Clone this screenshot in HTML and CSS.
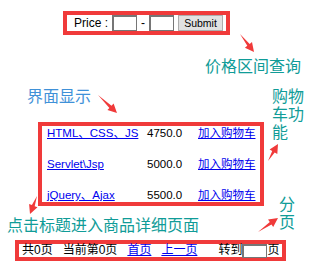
FILE: index.html
```html
<!DOCTYPE html>
<html lang="zh-CN">
<head>
  <meta charset="UTF-8">
  <meta name="viewport" content="width=device-width, initial-scale=1.0">
  <title>商品列表</title>
  <link rel="stylesheet" href="styles.css">
</head>
<body>
  <div class="page">
    <form class="box search">
      <label for="minPrice">Price :</label>
      <input id="minPrice" type="text">
      <span>-</span>
      <input id="maxPrice" type="text">
      <button type="button">Submit</button>
    </form>

    <div class="box list">
      <a href="#">HTML、CSS、JS</a><span>4750.0</span><a href="#">加入购物车</a>
      <a href="#">Servlet\Jsp</a><span>5000.0</span><a href="#">加入购物车</a>
      <a href="#">jQuery、Ajax</a><span>5500.0</span><a href="#">加入购物车</a>
    </div>

    <div class="box pager">
      <span>共0页</span>
      <span>当前第0页</span>
      <a href="#">首页</a>
      <a href="#">上一页</a>
      <span class="goto">转到<input type="text">页</span>
    </div>

    <!-- annotations -->
    <div class="note note-price">价格区间查询</div>
    <div class="note note-view">界面显示</div>
    <div class="note note-cart">购物<br>车功<br>能</div>
    <div class="note note-title">点击标题进入商品详细页面</div>
    <div class="note note-page">分<br>页</div>

    <svg class="arrows" viewBox="0 0 310 272" width="310" height="272">
      <polygon points="240,34 247.3,45.8 244.9,47.7 254,52 252,42.1 249.7,44"/>
      <polygon points="98,95 109.4,107.9 107.4,110.1 117,113 113.6,103.5 111.5,105.7"/>
      <polygon points="268,161 274.7,152.5 277.3,154 278,144 269.6,149.5 272.2,151"/>
      <polygon points="37,196 31.9,205.1 29.1,204 30,214 37.5,207.2 34.7,206.2"/>
      <polygon points="258,232 271.5,224.4 273.2,226.9 278,218 268,219.5 269.8,221.9"/>
    </svg>
  </div>
</body>
</html>
```

FILE: styles.css
```css
body {
  margin: 0;
  font-family: "Liberation Sans", "Noto Sans CJK SC", sans-serif;
  color: #000;
  background: #fff;
}

.page {
  position: relative;
  width: 310px;
  height: 272px;
  padding-top: 11px;
  box-sizing: border-box;
  overflow: hidden;
}

.box {
  border: 4px solid #f03a3a;
  box-sizing: border-box;
}

a {
  color: #0000ee;
}

/* price search */
.search {
  display: flex;
  align-items: center;
  gap: 4px;
  width: 167px;
  height: 24px;
  margin: 0 0 0 63px;
  padding: 0 2px 0 7px;
  font-size: 12px;
  white-space: nowrap;
}

.search > * {
  flex-shrink: 0;
}

.search input {
  width: 25px;
  height: 16px;
  margin: 0;
  padding: 0;
  border: 1px solid #767676;
  border-top-width: 2px;
  border-left-width: 2px;
  box-sizing: border-box;
}

.search button {
  width: 45px;
  height: 16px;
  margin: 0;
  padding: 0;
  font-family: "Liberation Sans", sans-serif;
  font-size: 10.5px;
  background: #e1e1e1;
  border: 1px solid #adadad;
}

/* product list */
.list {
  display: grid;
  grid-template-columns: 100px 51px auto;
  align-content: start;
  row-gap: 17px;
  width: 226px;
  height: 84px;
  margin: 87px 0 0 38px;
  padding: 0 4px 0 5px;
  font-size: 11.5px;
  line-height: 14px;
  white-space: nowrap;
}

/* paging */
.pager {
  display: flex;
  align-items: center;
  gap: 10px;
  width: 271px;
  height: 21px;
  margin: 34px 0 0 15px;
  padding-left: 3px;
  font-size: 12px;
  line-height: 13px;
  white-space: nowrap;
}

.goto {
  display: flex;
  align-items: center;
  margin-left: 11px;
}

.goto input {
  width: 25px;
  height: 14px;
  margin: 0;
  padding: 0;
  border: 1px solid #767676;
  border-top-width: 2px;
  border-left-width: 2px;
  box-sizing: border-box;
}

/* annotations */
.note {
  position: absolute;
  font-family: "Noto Sans CJK SC", sans-serif;
  font-size: 16px;
  line-height: 16px;
  color: #109c98;
  white-space: nowrap;
}

.note-price {
  left: 205px;
  top: 57px;
}

.note-view {
  left: 27px;
  top: 87px;
  color: #3f91d8;
}

.note-cart {
  left: 272px;
  top: 86px;
  line-height: 18px;
}

.note-title {
  left: 7px;
  top: 216px;
}

.note-page {
  left: 279px;
  top: 194px;
  line-height: 18px;
}

.arrows {
  position: absolute;
  left: 0;
  top: 0;
  fill: #f03a3a;
  pointer-events: none;
}
```
